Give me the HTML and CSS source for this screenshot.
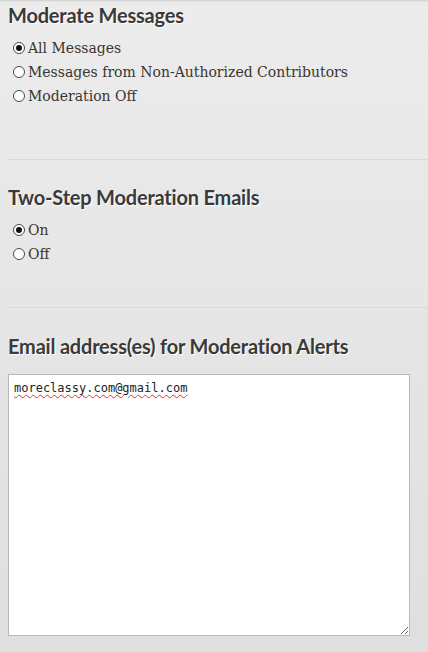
FILE: index.html
```html
<!DOCTYPE html>
<html>
<head>
<meta charset="utf-8">
<link rel="stylesheet" href="styles.css">
</head>
<body>
<div class="page">
  <section class="group">
    <h2 class="title">Moderate Messages</h2>
    <label class="opt"><input type="radio" name="mod" checked><span>All Messages</span></label>
    <label class="opt"><input type="radio" name="mod"><span>Messages from Non-Authorized Contributors</span></label>
    <label class="opt"><input type="radio" name="mod"><span>Moderation Off</span></label>
  </section>
  <hr class="sep sep-a">
  <section class="group">
    <h2 class="title">Two-Step Moderation Emails</h2>
    <label class="opt"><input type="radio" name="two" checked><span>On</span></label>
    <label class="opt"><input type="radio" name="two"><span>Off</span></label>
  </section>
  <hr class="sep sep-b">
  <section class="group">
    <h2 class="title title-gap">Email address(es) for Moderation Alerts</h2>
    <textarea class="emails">moreclassy.com@gmail.com</textarea>
  </section>
</div>
</body>
</html>
```
FILE: styles.css
```css
html, body {
  margin: 0;
  padding: 0;
}
body {
  width: 428px;
  height: 652px;
  overflow: hidden;
  background: linear-gradient(#ececec, #dfdfdf);
  box-shadow: inset 0 2px 2px -1px #cfcfcf;
}
.page {
  padding: 2px 0 0 8px;
}
.group {
  display: flex;
  flex-direction: column;
  align-items: flex-start;
}
.title {
  margin: 0 0 8px 0;
  font-family: Lato, sans-serif;
  font-weight: 700;
  font-size: 20px;
  line-height: 26px;
  color: #3a3a3a;
  text-shadow: 1px 1px 0 #ffffff;
  letter-spacing: -0.2px;
}
.title-gap {
  margin-bottom: 15px;
}
.opt {
  display: flex;
  align-items: center;
  height: 24px;
  font-family: "DejaVu Serif", serif;
  font-size: 14px;
  color: #3b3530;
}
.opt input {
  appearance: none;
  -webkit-appearance: none;
  box-sizing: border-box;
  margin: 0 3px 0 5px;
  width: 12px;
  height: 12px;
  border: 1px solid #4a4a4a;
  border-radius: 50%;
  background: #fff;
  display: grid;
  place-items: center;
}
.opt input:checked::after {
  content: "";
  width: 6px;
  height: 6px;
  border-radius: 50%;
  background: #111;
}
.sep {
  border: 0;
  border-top: 1px solid #dadada;
  height: 0;
}
.sep-a {
  margin: 51px 0 24px 0;
}
.sep-b {
  margin: 41px 0 25px 0;
}
.emails {
  display: block;
  box-sizing: border-box;
  width: 402px;
  height: 262px;
  margin: 0;
  padding: 6px 5px;
  border: 1px solid #b8b8b8;
  border-radius: 0;
  background: #fff;
  font-family: "DejaVu Sans Mono", monospace;
  font-size: 12px;
  color: #222;
  resize: both;
  text-decoration: underline wavy #e03030 1px;
  text-underline-offset: 2px;
}
```
